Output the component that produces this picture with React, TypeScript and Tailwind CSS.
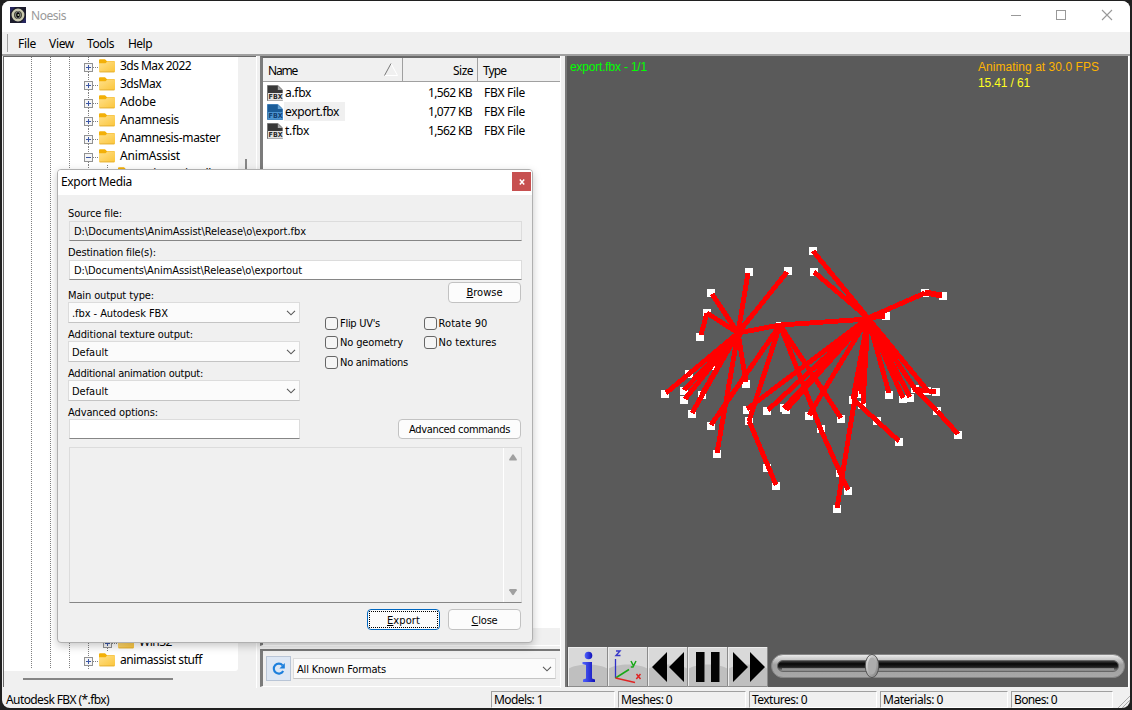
import { useLayoutEffect, useRef, useState, type ReactNode } from "react";

const UI = "font-['Noto_Sans','Open_Sans',sans-serif] text-[12px] leading-[16px]";
const TAHOMA = "font-['DejaVu_Sans_Condensed','DejaVu_Sans',sans-serif] text-[11px] leading-[16px]";

/** Single-line text whose tracking is adjusted so that it spans a given width. */
function T({ children, w, raised, className = "" }: { children: string; w: number; raised?: boolean; className?: string }) {
  const ref = useRef<HTMLSpanElement>(null);
  const [spacing, setSpacing] = useState(0);
  useLayoutEffect(() => {
    const el = ref.current;
    if (el) setSpacing((w - el.getBoundingClientRect().width) / children.length);
  }, []);
  return (
    <span ref={ref} className={`inline-block whitespace-pre ${raised ? "" : "translate-y-px"} ${className}`} style={{ letterSpacing: spacing }}>
      {children}
    </span>
  );
}

function Folder() {
  return (
    <svg width="16" height="14" viewBox="0 0 16 14" className="shrink-0">
      <defs>
        <linearGradient id="folder" x1="0" y1="0" x2="1" y2="1">
          <stop offset="0" stopColor="#ffe08a" />
          <stop offset="1" stopColor="#fbc53a" />
        </linearGradient>
      </defs>
      <path d="M0 1.2Q0 .2 1 .2H6L8 2.2H15Q16 2.2 16 3V8H0Z" fill="#f3b008" />
      <path d="M0 4.2H6.5L8 2.8H15.2Q16 2.8 16 3.6V12.3Q16 13.2 15 13.2H1Q0 13.2 0 12.3Z" fill="url(#folder)" />
      <path d="M.6 12.9H15.4" stroke="#dda52a" strokeWidth=".7" />
    </svg>
  );
}

function Expander({ open }: { open?: boolean }) {
  return (
    <svg width="9" height="9" viewBox="0 0 9 9" className="shrink-0" shapeRendering="crispEdges">
      <rect x=".5" y=".5" width="8" height="8" fill="#f5f5f5" stroke="#929292" />
      <path d={open ? "M2 4.5H7" : "M2 4.5H7M4.5 2V7"} stroke="#3c57a5" />
    </svg>
  );
}

const DOTS_V = "bg-[repeating-linear-gradient(to_bottom,#808080_0_1px,transparent_1px_2px)]";
const DOTS_H = "bg-[repeating-linear-gradient(to_right,#808080_0_1px,transparent_1px_2px)]";

type Node = { name?: string; w?: number; depth?: number; open?: boolean };
const NODES: Node[] = [
  { name: "3ds Max 2022", w: 71 },
  { name: "3dsMax", w: 41 },
  { name: "Adobe", w: 36 },
  { name: "Anamnesis", w: 59 },
  { name: "Anamnesis-master", w: 100 },
  { name: "AnimAssist", w: 60, open: true },
  { name: "AnimAssistDll", w: 72, depth: 1 },
  ...Array.from({ length: 25 }, () => ({})),
  { name: "Win32", w: 33, depth: 1 },
  { name: "animassist stuff", w: 82 },
];

function TreeRow({ node }: { node: Node }) {
  return (
    <div className="flex h-[18px] shrink-0 items-stretch">
      <div className="w-[27px]" />
      {[0, 1, 2].map((i) => (
        <div key={i} className="w-[19px]">
          <div className={`h-full w-px ${DOTS_V}`} />
        </div>
      ))}
      {node.depth ? (
        <div className="w-[19px]">
          <div className={`h-full w-px ${DOTS_V}`} />
        </div>
      ) : null}
      {node.name ? (
        <>
          <div className="-ml-1 flex w-[9px] flex-col">
            <div className={`ml-1 h-[6px] w-px ${DOTS_V}`} />
            <Expander open={node.open} />
            <div className={`ml-1 h-[3px] w-px ${DOTS_V}`} />
          </div>
          <div className={`mt-[10px] h-px w-[6px] ${DOTS_H}`} />
          <div className="mt-[2px] h-[14px] w-[21px]">
            <Folder />
          </div>
          <T w={node.w ?? 50}>{node.name}</T>
        </>
      ) : (
        <div className={`h-full w-px ${DOTS_V}`} />
      )}
    </div>
  );
}

function FileIcon({ selected }: { selected?: boolean }) {
  return (
    <svg width="17" height="16" viewBox="0 0 17 16" className="shrink-0">
      <path d="M.5 .5H10.8L15.5 5V15.5H.5Z" fill={selected ? "#1b5c98" : "#383838"} stroke={selected ? "#3f7db5" : "#777"} />
      <path d="M10.8 .8V5H15.2Z" fill={selected ? "#66a3d5" : "#aaa"} />
      <rect x="1" y="8" width="15" height="7.5" fill={selected ? "#4b93d0" : "#e2e2e2"} />
      <text x="1.6" y="14.4" fontFamily="DejaVu Sans" fontWeight="bold" fontSize="7" textLength="14" lengthAdjust="spacingAndGlyphs" fill={selected ? "#123f70" : "#2a2a2a"}>
        FBX
      </text>
    </svg>
  );
}

function Chevron() {
  return (
    <svg width="10" height="6" viewBox="0 0 10 6" className="shrink-0">
      <path d="M1 .8L5 4.8L9 .8" fill="none" stroke="#5a5a5a" strokeWidth="1.1" />
    </svg>
  );
}

function Select({ children, w, className = "" }: { children: string; w: number; className?: string }) {
  return (
    <div className={`flex items-center justify-between border border-[#dcdcdc] border-b-[#c4c4c4] bg-[#fbfbfb] pr-[3px] pl-[3px] ${className}`}>
      <T w={w}>{children}</T>
      <Chevron />
    </div>
  );
}

function Button({ children, className = "" }: { children: ReactNode; className?: string }) {
  return (
    <div className={`flex h-[21px] items-center justify-center rounded-[4px] border border-[#c2c2c2] bg-[#fcfcfc] ${className}`}>{children}</div>
  );
}

function Check({ children, w }: { children: string; w: number }) {
  return (
    <div className="flex h-[13px] w-[99px] items-center gap-[2px]">
      <div className="size-[13px] shrink-0 rounded-[3px] border border-[#666] bg-[#f5f5f5]" />
      <T w={w}>{children}</T>
    </div>
  );
}

function Field({ label, lw, children }: { label: string; lw: number; children: ReactNode }) {
  return (
    <div className="mb-[3px]">
      <div className="flex h-[15px] items-center">
        <T w={lw}>{label}</T>
      </div>
      {children}
    </div>
  );
}

function ExportDialog() {
  return (
    <div className={`absolute top-[169px] left-[57px] flex h-[474px] w-[476px] flex-col overflow-hidden rounded-[4px] border border-[#b0b0b0] bg-[#f0f0f0] shadow-[0_3px_9px_rgba(0,0,0,0.22)] ${TAHOMA}`}>
      <div className={`flex h-[25px] shrink-0 items-start justify-between bg-white pr-px pl-[3px] ${UI}`}>
        <T w={71} className="mt-[3px]">Export Media</T>
        <div className="mt-[2px] flex h-[19px] w-[19px] items-center justify-center bg-[#c75050]">
          <svg width="6" height="6" viewBox="0 0 6 6">
            <path d="M.8 .5L5.2 5.5M5.2 .5L.8 5.5" stroke="#fff" strokeWidth="1.5" />
          </svg>
        </div>
      </div>
      <div className="flex flex-col pt-[10px] pr-[10px] pl-[11px]">
        <div className="-ml-px flex h-[16px] items-center"><T w={54}>Source file:</T></div>
        <div className="flex h-[20px] items-center border border-[#dcdcdc] border-b-[#868686] pl-[4px]"><T w={232}>{"D:\\Documents\\AnimAssist\\Release\\o\\export.fbx"}</T></div>
        <div className="mt-[3px] -ml-px flex h-[16px] items-center"><T w={88}>Destination file(s):</T></div>
        <div className="flex h-[20px] items-center border border-[#dcdcdc] border-b-[#868686] bg-white pl-[4px]"><T w={228}>{"D:\\Documents\\AnimAssist\\Release\\o\\exportout"}</T></div>
        <div className="flex h-[159px] justify-between">
          <div className="-ml-px w-[232px] pt-[7px]">
            <Field label="Main output type:" lw={86}><Select w={96} className="h-[21px]">{".fbx - Autodesk FBX"}</Select></Field>
            <Field label="Additional texture output:" lw={125}><Select w={36} className="h-[21px]">Default</Select></Field>
            <Field label="Additional animation output:" lw={135}><Select w={36} className="h-[21px]">Default</Select></Field>
            <Field label="Advanced options:" lw={90}><div className="ml-px h-[20px] border border-[#dcdcdc] border-b-[#868686] bg-white" /></Field>
          </div>
          <div className="flex w-[197px] flex-col pt-[2px]">
            <Button className="mr-px w-[73px] self-end"><T w={36} className="first-letter:underline">Browse</T></Button>
            <div className="mt-[14px] flex"><Check w={40}>{"Flip UV's"}</Check><Check w={49}>Rotate 90</Check></div>
            <div className="mt-[6px] flex"><Check w={63}>No geometry</Check><Check w={58}>No textures</Check></div>
            <div className="mt-[7px] flex"><Check w={68}>No animations</Check></div>
            <Button className="mt-[50px] mr-px w-[123px] self-end"><T w={101}>Advanced commands</T></Button>
          </div>
        </div>
        <div className="mt-[8px] flex h-[156px] justify-end border border-[#dcdcdc] border-b-[#868686]">
          <div className="flex w-[18px] flex-col items-center justify-between border-l border-white py-[6px]">
            <svg width="8" height="7" viewBox="0 0 8 7"><path d="M3.2 .7Q4 -.1 4.8 .7L7.8 5.3Q8 6.5 7 6.5H1Q0 6.5 .2 5.3Z" fill="#a0a0a0" /></svg>
            <svg width="8" height="7" viewBox="0 0 8 7"><path d="M3.2 5.8Q4 6.6 4.8 5.8L7.8 1.2Q8 0 7 0H1Q0 0 .2 1.2Z" fill="#a0a0a0" /></svg>
          </div>
        </div>
        <div className="mt-[6px] mr-px flex justify-end gap-[8px]">
          <div className="flex h-[21px] w-[73px] rounded-[4px] border border-[#0067c0] bg-[#fcfcfc] p-px">
            <div className="flex flex-1 items-center justify-center border border-dotted border-black"><T w={33} className="first-letter:underline">Export</T></div>
          </div>
          <Button className="w-[73px]"><T w={26} className="first-letter:underline">Close</T></Button>
        </div>
      </div>
    </div>
  );
}

const LINES: [number, number, number, number][] = [
  [738, 333, 712, 294], [738, 333, 748, 273], [738, 333, 787, 272], [738, 333, 707, 313], [707, 313, 701, 335],
  [738, 333, 666, 393], [738, 333, 684, 390], [738, 333, 685, 399], [738, 333, 692, 413], [738, 333, 702, 394],
  [738, 333, 715, 366], [738, 333, 746, 382], [738, 333, 717, 453], [738, 333, 780, 325],
  [780, 325, 868, 319], [780, 325, 711, 425], [780, 325, 749, 421], [780, 325, 821, 430], [821, 430, 848, 490], [780, 325, 841, 418],
  [749, 421, 776, 485],
  [868, 318, 813, 251], [868, 318, 814, 272], [868, 318, 925, 293], [925, 293, 942, 296], [925, 292, 942, 295], [868, 318, 885, 316], [868, 318, 885, 314],
  [868, 318, 747, 409], [868, 318, 768, 410], [868, 318, 784, 408], [868, 318, 786, 410], [868, 318, 809, 415],
  [868, 318, 853, 399], [868, 318, 863, 404], [868, 318, 861, 394], [868, 318, 837, 508], [853, 399, 877, 421], [877, 421, 899, 441],
  [868, 318, 889, 393], [868, 318, 903, 398], [868, 318, 910, 397], [868, 318, 915, 389], [868, 318, 927, 390],
  [913, 389, 936, 392], [915, 389, 937, 411], [937, 411, 958, 434],
];
const JOINTS: [number, number][] = [
  [711, 293], [749, 272], [788, 271], [707, 313], [700, 337], [689, 374], [684, 391], [665, 394], [684, 400], [692, 414], [702, 395],
  [715, 366], [746, 384], [711, 426], [717, 454], [747, 410], [749, 421], [767, 411], [784, 408], [786, 410], [809, 416], [767, 468],
  [776, 486], [780, 326], [738, 333], [813, 251], [814, 272], [925, 293], [943, 296], [886, 316], [868, 319], [889, 395], [903, 399],
  [910, 398], [915, 389], [927, 391], [936, 392], [937, 411], [958, 435], [861, 394], [853, 400], [862, 405], [877, 421], [899, 442],
  [841, 419], [821, 429], [840, 473], [848, 491], [837, 509],
];

function Skeleton() {
  return (
    <svg width="350" height="290" viewBox="640 235 350 290" shapeRendering="crispEdges" className="absolute top-[179px] left-[73px]">
      {JOINTS.map(([x, y], i) => (
        <rect key={i} x={x - 4} y={y - 4} width="8" height="8" fill={x === 738 || x === 868 ? "#ff0000" : "#fff"} />
      ))}
      {LINES.map(([x1, y1, x2, y2], i) => (
        <line key={i} x1={x1} y1={y1} x2={x2} y2={y2} stroke="#f00" strokeWidth="4.9" />
      ))}
    </svg>
  );
}

function ToolButton({ children }: { children: ReactNode }) {
  return (
    <svg width="40" height="40" viewBox="0 0 40 40" className="shrink-0">
      <rect width="40" height="40" fill="#d9d9d9" />
      <path d="M0 22C9 16 31 16 40 22V40H0Z" fill="#bfbfbf" />
      <path d="M.5 40V.5H40" fill="none" stroke="#ededed" />
      <path d="M39.5 0V39.5H0" fill="none" stroke="#8b8b8b" />
      {children}
    </svg>
  );
}

function PlayerBar() {
  return (
    <div className="ml-px flex h-[40px] items-center">
      <ToolButton>
        <defs><linearGradient id="inf"><stop offset="0" stopColor="#5264ff" /><stop offset="1" stopColor="#1010b8" /></linearGradient></defs>
        <circle cx="20.5" cy="8.5" r="3.8" fill="url(#inf)" />
        <path d="M14.5 15H24V31.5L27 32.5V35H15V32.5L18 31.5V18L14.5 17Z" fill="url(#inf)" />
      </ToolButton>
      <ToolButton>
        <path d="M7.5 12V31" stroke="#3030c8" strokeWidth="1.3" />
        <path d="M7.5 31L21 22.5" stroke="#18a818" strokeWidth="1.5" />
        <path d="M7.5 31L27 35.5" stroke="#e02525" strokeWidth="1.3" />
        <path d="M8 4H12L8 8.5H12.5" fill="none" stroke="#3838c8" strokeWidth="1.4" />
        <path d="M23 14L25.2 18.3M28 14L25 20H22.8" fill="none" stroke="#18a818" strokeWidth="1.5" />
        <path d="M28.5 27L32.5 32M32.5 27L28.3 32" stroke="#e02525" strokeWidth="1.5" />
      </ToolButton>
      <ToolButton><path d="M4 20L19 5V35ZM21 20L36 5V35Z" fill="#000" /></ToolButton>
      <ToolButton><path d="M8 5H17V35H8ZM23 5H32V35H23Z" fill="#050505" /><path d="M16.5 5V35M31.5 5V35" stroke="#666" /></ToolButton>
      <ToolButton><path d="M5 5L20 20L5 35ZM22 5L37 20L22 35Z" fill="#000" /></ToolButton>
      <svg width="355" height="26" viewBox="0 0 355 26" className="-mt-[2px] ml-[3px]">
        <defs>
          <linearGradient id="rail" x2="0" y2="1"><stop offset="0" stopColor="#eeeeee" /><stop offset=".45" stopColor="#a0a0a0" /><stop offset="1" stopColor="#a8a8a8" /></linearGradient>
          <linearGradient id="slot" x2="0" y2="1"><stop offset="0" stopColor="#454545" /><stop offset=".3" stopColor="#080808" /><stop offset=".6" stopColor="#222" /><stop offset="1" stopColor="#aaa" /></linearGradient>
          <linearGradient id="thumb" x1="0" y1="0" x2="1" y2="1"><stop offset="0" stopColor="#eeeeee" /><stop offset="1" stopColor="#777" /></linearGradient>
        </defs>
        <rect x=".5" y="1.5" width="353" height="23" rx="11.5" fill="url(#rail)" stroke="#858585" />
        <rect x="6.5" y="7.5" width="341" height="11" rx="5.5" fill="url(#slot)" stroke="#666" />
        <path d="M11 16H343" stroke="#bcbcbc" />
        <ellipse cx="101" cy="13" rx="6.7" ry="11.6" fill="url(#thumb)" stroke="#555" />
        <ellipse cx="101" cy="13" rx="4.2" ry="8.5" fill="#acacac" />
      </svg>
    </div>
  );
}

function StatusCell({ children, w, className }: { children: string; w: number; className: string }) {
  return (
    <div className={`h-[17px] shrink-0 border border-[#a0a0a0] border-r-white border-b-white pl-[2px] ${className}`}>
      <T raised w={w}>{children}</T>
    </div>
  );
}

const FILES: [string, number, string, boolean][] = [
  ["a.fbx", 26, "1,562 KB", false],
  ["export.fbx", 54, "1,077 KB", true],
  ["t.fbx", 24, "1,562 KB", false],
];

export default function App() {
  return (
    <div className={`relative h-[710px] w-[1132px] overflow-hidden bg-[#202020] pt-px pl-[2px] text-black ${UI}`}>
      <div className="flex h-[707px] w-[1128px] flex-col overflow-hidden rounded-[8px] bg-[#f0f0f0]">
        <header className="flex h-[31px] shrink-0 items-center bg-white pl-[8px]">
          <svg width="16" height="16" viewBox="0 0 16 16" className="-mt-[3px]">
            <rect width="16" height="16" fill="#1c1c2c" />
            <path d="M0 0H5L0 6ZM16 16H11L16 10Z" fill="#27275e" />
            <circle cx="8" cy="8" r="5.2" fill="#3c3f2e" stroke="#c9c8ae" strokeWidth="2.5" />
            <ellipse cx="8" cy="8" rx="2.4" ry="3.4" fill="#000" stroke="#999" />
            <circle cx="8.4" cy="8" r="1" fill="#aebb91" />
          </svg>
          <T raised w={35} className="-mt-px ml-[5px] text-[#999]">Noesis</T>
          <svg width="104" height="12" viewBox="0 0 104 12" className="-mt-[3px] mr-[16px] ml-auto" fill="none" stroke="#999">
            <path d="M1 6.5H11" />
            <rect x="46.5" y="1.5" width="9" height="9" />
            <path d="M92 1L102 11M102 1L92 11" strokeWidth="1.1" />
          </svg>
        </header>
        <nav className="flex h-[22px] shrink-0 items-center">
          <div className="mr-[9px] ml-[5px] h-[18px] w-px bg-[#a0a0a0]" />
          <T w={18} className="mr-[13px] ml-px">File</T>
          <T w={25} className="mr-[13px]">View</T>
          <T w={27} className="mr-[14px]">Tools</T>
          <T w={24}>Help</T>
        </nav>
        <main className="flex h-[634px] shrink-0 border-t-[2px] border-[#a0a0a0]">
          <div className="ml-px flex h-[631px] w-[253px] flex-col border-t border-l border-[#696969]">
            <div className="flex h-[614px]">
              <div className="flex w-[234px] flex-col overflow-hidden rounded-br-[3px] bg-white">
                {NODES.map((n, i) => (
                  <TreeRow key={i} node={n} />
                ))}
              </div>
              <div className="flex-1 pt-[102px] pl-[7px]">
                <div className="h-[180px] w-[2px] bg-[#868686]" />
              </div>
            </div>
            <div className="mt-[7px] ml-[19px] h-[2px] w-[150px] bg-[#868686]" />
          </div>
          <div className="w-[4px] border-l border-white" />
          <div className="flex w-[301px] flex-col border-r border-white">
            <div className="flex h-[590px] flex-col border-t-2 border-l-[3px] border-t-[#696969] border-l-[#7b7b7b] border-b border-b-white">
              <div className="flex h-[24px] shrink-0 items-center border-b border-[#a0a0a0]">
                <div className="flex h-full w-[140px] items-center justify-between border-r border-[#a0a0a0] pr-[4px] pl-[5px]">
                  <T w={29}>Name</T>
                  <svg width="14" height="13" viewBox="0 0 14 13" fill="none"><path d="M.5 12.5H13.5L7 .5" stroke="#fff" /><path d="M.5 12.5L7 .5" stroke="#777" /></svg>
                </div>
                <div className="flex h-full w-[75px] items-center justify-end border-r border-[#a0a0a0] pr-[4px]"><T w={20}>Size</T></div>
                <T w={23} className="ml-[5px]">Type</T>
              </div>
              <div className="flex flex-1 flex-col bg-white pt-px">
                {FILES.map(([name, w, size, sel]) => (
                  <div key={name} className="flex h-[19px] items-center pl-[4px]">
                    <FileIcon selected={sel} />
                    <div className={`flex h-[19px] items-center pl-px ${sel ? "bg-[#f0f0f0] pr-[6px]" : ""}`}><T raised w={w}>{name}</T></div>
                    <T raised w={44} className="ml-auto">{size}</T>
                    <T raised w={41} className="mr-[35px] ml-[12px]">FBX File</T>
                  </div>
                ))}
              </div>
              <div className="h-[17px] shrink-0" />
            </div>
            <div className="mt-[3px] flex h-[38px] items-center border-t-2 border-l-[3px] border-t-[#777] border-l-[#7b7b7b] border-b border-b-white pl-[3px]">
              <div className="flex h-[25px] w-[25px] items-center justify-center border border-[#b9c5d6] bg-[#dde7f4]">
                <svg width="14" height="14" viewBox="0 0 14 14"><path d="M11.2 9A5 5 0 1 1 10.6 3.4" fill="none" stroke="#1c7fdc" strokeWidth="2.1" /><path d="M12.8 1V6.6H7.4Z" fill="#1c7fdc" /></svg>
              </div>
              <div className={`ml-[2px] ${TAHOMA}`}><Select w={89} className="h-[21px] w-[263px]">All Known Formats</Select></div>
            </div>
          </div>
          <div className="w-[4px]" />
          <div className="relative flex h-[631px] w-[563px] flex-col justify-between border-l-2 border-[#777] bg-[#5a5a5a]">
            <div className="flex justify-between pt-[3px] pr-[29px] pl-[3px] font-['Liberation_Sans',Arial,sans-serif] text-[12px]">
              <T raised w={77} className="text-[#00ff00]">export.fbx - 1/1</T>
              <div className="flex flex-col">
                <T raised w={121} className="text-[#ffb400]">Animating at 30.0 FPS</T>
                <T raised w={52} className="self-start text-[#ffff20]">15.41 / 61</T>
              </div>
            </div>
            <Skeleton />
            <PlayerBar />
          </div>
          <div className="w-px bg-white" />
        </main>
        <footer className="flex flex-1 items-start pt-[3px] pl-[4px]">
          <T w={103}>Autodesk FBX (*.fbx)</T>
          <div className="ml-auto flex gap-[3px]">
            <StatusCell w={49} className="w-[124px]">Models: 1</StatusCell>
            <StatusCell w={51} className="w-[128px]">Meshes: 0</StatusCell>
            <StatusCell w={55} className="w-[128px]">Textures: 0</StatusCell>
            <StatusCell w={60} className="w-[128px]">Materials: 0</StatusCell>
            <StatusCell w={43} className="w-[102px]">Bones: 0</StatusCell>
          </div>
          <svg width="17" height="17" viewBox="0 0 17 17"><path d="M5 17L17 5M9 17L17 9M13 17L17 13" stroke="#aaa" /></svg>
        </footer>
      </div>
      <ExportDialog />
    </div>
  );
}
